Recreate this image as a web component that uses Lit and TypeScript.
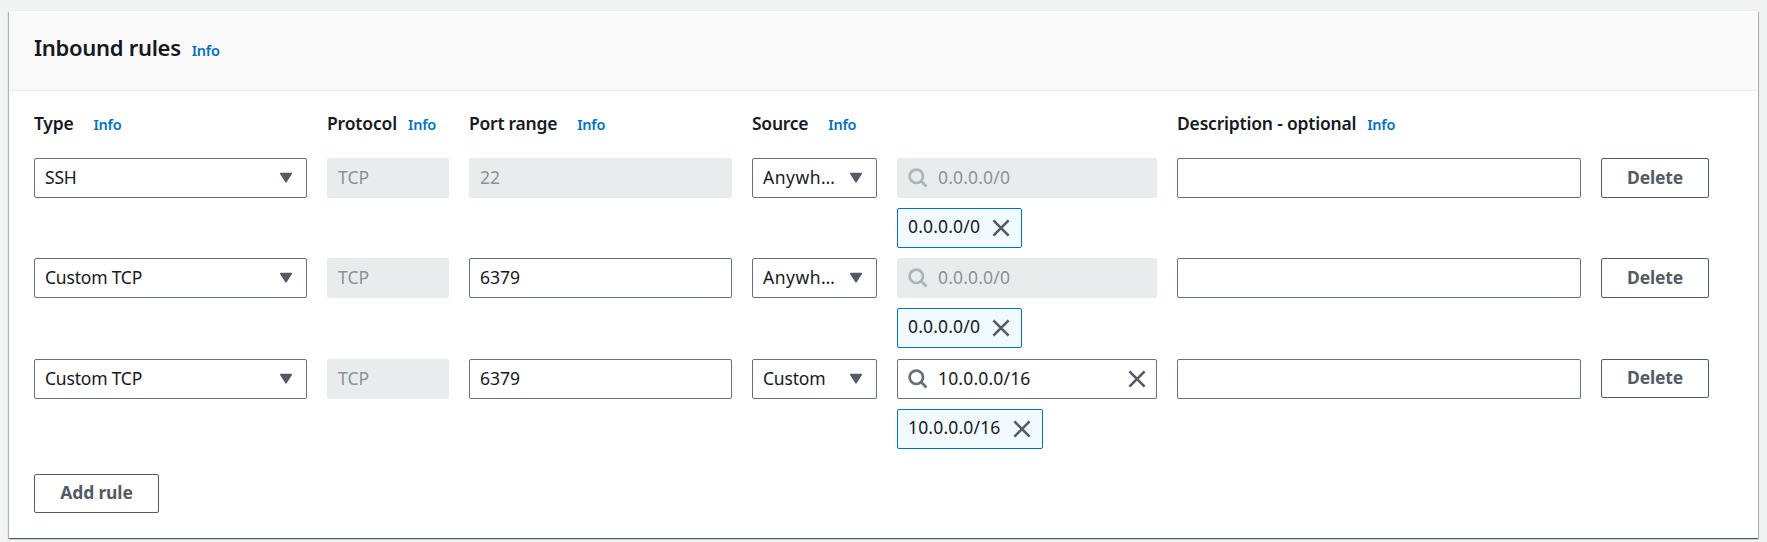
import { LitElement, html, css, svg, nothing } from "lit";
import { classMap } from "lit/directives/class-map.js";

interface Rule {
  type: string;
  port: string;
  portLocked: boolean;
  source: string;
  cidr: string;
  cidrLocked: boolean;
}

const RULES: Rule[] = [
  { type: "SSH", port: "22", portLocked: true, source: "Anywh…", cidr: "0.0.0.0/0", cidrLocked: true },
  { type: "Custom TCP", port: "6379", portLocked: false, source: "Anywh…", cidr: "0.0.0.0/0", cidrLocked: true },
  { type: "Custom TCP", port: "6379", portLocked: false, source: "Custom", cidr: "10.0.0.0/16", cidrLocked: false },
];

const caret = html`<svg class="caret" width="14" height="12" viewBox="0 0 14 12">
  ${svg`<path d="M1.7 1.6H12.3L7 9.9Z" fill="#545b64" stroke="#545b64" stroke-width="1.5" stroke-linejoin="round"/>`}
</svg>`;

const cross = html`<svg class="cross" width="18" height="18" viewBox="0 0 18 18">
  ${svg`<path d="M1.4 1.4L16.6 16.6M16.6 1.4L1.4 16.6" fill="none" stroke="#545b64" stroke-width="2.6"/>`}
</svg>`;

const lens = html`<svg class="lens" width="20" height="20" viewBox="0 0 20 20">
  ${svg`<circle cx="8.3" cy="8.3" r="6.7" fill="none" stroke="currentColor" stroke-width="2.7"/>
  <path d="M12.6 12.6L18.4 18.4" fill="none" stroke="currentColor" stroke-width="2.8"/>`}
</svg>`;

class AppRoot extends LitElement {
  static styles = css`
    :host {
      display: block;
      box-sizing: border-box;
      height: 542px;
      padding: 11px 9px 0;
      background: #f2f3f3;
      color: #16191f;
      font: 17.5px/24px "Noto Sans", sans-serif;
      overflow: hidden;
    }
    * { box-sizing: border-box; }
    svg { display: block; flex: none; }
    .card {
      width: 1749px;
      height: 527px;
      background: #fff;
      box-shadow: 0 -1px 0 0 #eaeded, 0 1px 1px 0 rgba(0, 28, 36, 0.5),
        1px 1px 1px 0 rgba(0, 28, 36, 0.22), -1px 1px 1px 0 rgba(0, 28, 36, 0.22);
    }
    .head {
      display: flex;
      align-items: baseline;
      gap: 11px;
      height: 80px;
      padding: 19px 25px 0;
      background: #fafafa;
      border-bottom: 1px solid #eaeded;
    }
    h2 {
      margin: 0;
      font-size: 22px;
      line-height: 34px;
      font-weight: 600;
      letter-spacing: -0.3px;
    }
    .info {
      color: #0073bb;
      font-size: 14.5px;
      font-weight: 600;
      letter-spacing: -0.25px;
    }
    .body { padding: 20px 25px 0; }
    .grid {
      display: grid;
      grid-template-columns: 273px 122px 263px 125px 260px 404px 108px;
      column-gap: 20px;
      align-items: start;
    }
    .labels { height: 47px; }
    .label {
      display: flex;
      align-items: baseline;
      gap: 20px;
      font-weight: 600;
      letter-spacing: -0.25px;
      white-space: nowrap;
    }
    .label.near { gap: 11px; letter-spacing: -0.2px; }
    .label.protocol { letter-spacing: -0.15px; }
    .label.source { grid-column: span 2; }
    .rule { height: 100px; }
    .rule.last { margin-top: 1px; height: 115px; }
    .field {
      display: flex;
      align-items: center;
      height: 40px;
      padding: 0 10px;
      background: #fff;
      border: 1px solid #687078;
      border-radius: 2px;
      white-space: nowrap;
    }
    .field.off {
      background: #e9eced;
      border-color: #e9eced;
      color: #879596;
    }
    .text { padding-bottom: 2px; }
    .select { justify-content: space-between; padding-right: 13px; }
    .select .text { padding-bottom: 3px; letter-spacing: -0.2px; }
    .select .text.cut { letter-spacing: 0.5px; }
    .search { padding: 0 10px; }
    .search .text { flex: 1; padding-left: 10px; letter-spacing: 0.17px; }
    .lens { color: #687078; }
    .off .lens { color: #aab7b8; }
    .chip {
      display: flex;
      align-items: center;
      gap: 12px;
      width: fit-content;
      height: 40px;
      margin-top: 10px;
      padding: 0 11px 0 10px;
      background: #f1faff;
      border: 1px solid #0073bb;
      border-radius: 2px;
      letter-spacing: 0.17px;
    }
    .chip .text { padding-bottom: 4px; }
    button {
      display: block;
      height: 40px;
      padding: 0 0 3px;
      background: #fff;
      border: 1px solid #545b64;
      border-radius: 2px;
      color: #545b64;
      font: 700 17.5px/24px "Noto Sans", sans-serif;
      letter-spacing: -0.15px;
    }
    .short { height: 39px; }
    .add { width: 125px; height: 39px; }
  `;

  private label(text: string, extra = "") {
    return html`<div class="label ${extra}"><span>${text}</span><span class="info">Info</span></div>`;
  }

  private select(text: string) {
    return html`<div class="field select">
      <span class=${classMap({ text: true, cut: text.endsWith("…") })}>${text}</span>${caret}
    </div>`;
  }

  private input(text: string, off: boolean) {
    return html`<div class=${classMap({ field: true, off })}><span class="text">${text}</span></div>`;
  }

  private rule(r: Rule, last: boolean) {
    return html`<div class=${classMap({ grid: true, rule: true, last })}>
      ${this.select(r.type)} ${this.input("TCP", true)} ${this.input(r.port, r.portLocked)}
      ${this.select(r.source)}
      <div>
        <div class=${classMap({ field: true, search: true, off: r.cidrLocked })}>
          ${lens}<span class="text">${r.cidr}</span>${r.cidrLocked ? nothing : cross}
        </div>
        <div class="chip"><span class="text">${r.cidr}</span>${cross}</div>
      </div>
      ${this.input("", false)}
      <button class=${classMap({ short: last })}>Delete</button>
    </div>`;
  }

  render() {
    return html`<section class="card">
      <div class="head"><h2>Inbound rules</h2><span class="info">Info</span></div>
      <div class="body">
        <div class="grid labels">
          ${this.label("Type")} ${this.label("Protocol", "near protocol")} ${this.label("Port range")}
          ${this.label("Source", "source")} ${this.label("Description - optional", "near")}
        </div>
        ${RULES.map((r, i) => this.rule(r, i === RULES.length - 1))}
        <button class="add">Add rule</button>
      </div>
    </section>`;
  }
}
customElements.define("app-root", AppRoot);
